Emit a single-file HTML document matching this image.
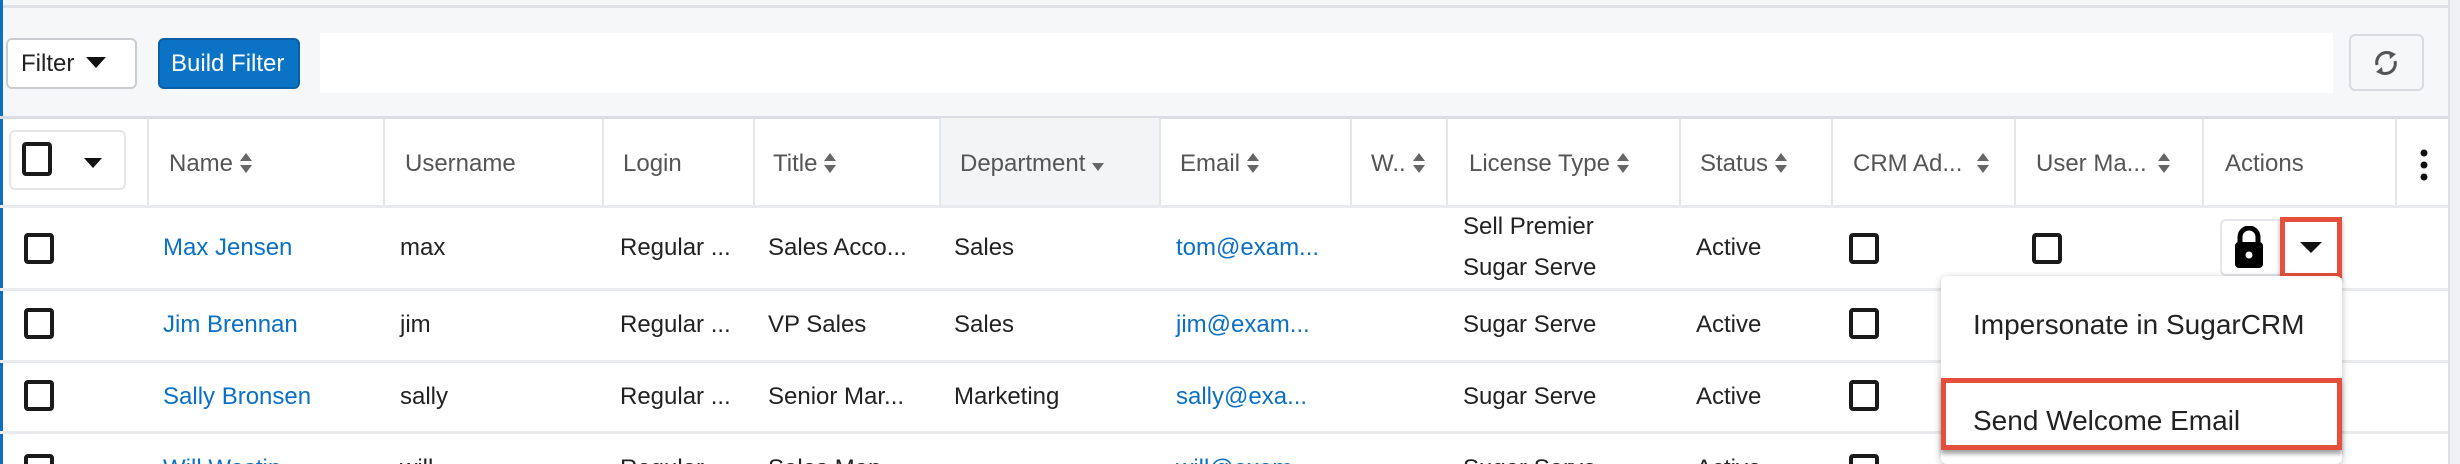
<!DOCTYPE html>
<html style="width:2460px;height:464px;overflow:hidden"><head><style>
*{margin:0;padding:0;box-sizing:border-box}
body{width:2460px;height:464px;overflow:hidden;background:#fff;font-family:"Liberation Sans",sans-serif;font-size:24px;color:#222;position:relative}
.a{position:absolute}
.t{position:absolute;white-space:nowrap;line-height:1}
.h{color:#555}
.l{color:#0b70c4}
.cb{position:absolute;width:30px;height:31px;border:4px solid #1a1a1a;border-radius:4px;background:#fff}
.vl{position:absolute;top:118px;height:89px;width:2px;background:#e3e6ea}
.hl{position:absolute;left:0;width:2448px;height:3px;background:#e8eaed}
.sort{display:inline-block;vertical-align:middle;margin-left:6px;width:14px;height:22px;position:relative;top:-2px}
</style></head><body>
<div class="a" style="left:0;top:0;width:2448px;height:118px;background:#f6f7f9"></div>
<div class="a" style="left:0;top:5px;width:2448px;height:3px;background:#dde1e6"></div>
<div class="a" style="left:0;top:0;width:3px;height:464px;background:#0b70c4"></div>
<div class="a" style="left:2448px;top:0;width:12px;height:464px;background:#eef0f2;border-left:2px solid #dcdfe3"></div>
<div class="a" style="left:6px;top:38px;width:131px;height:51px;background:#fff;border:2px solid #c9ccd0;border-radius:6px"></div>
<div class="t" style="left:21px;top:52px;color:#222">Filter</div>
<svg class="a" style="left:86px;top:57px" width="20" height="12"><path d="M0 0H20L10 11Z" fill="#111"/></svg>
<div class="a" style="left:158px;top:38px;width:142px;height:51px;background:#0b73c6;border:2px solid #0a5fa5;border-radius:6px"></div>
<div class="t" style="left:171px;top:52px;color:#fff">Build Filter</div>
<div class="a" style="left:320px;top:33px;width:2013px;height:60px;background:#fff"></div>
<div class="a" style="left:2349px;top:34px;width:75px;height:57px;background:#f6f7f9;border:2px solid #d8dbdf;border-radius:6px"></div>
<svg class="a" style="left:2370px;top:48px" width="32" height="30" viewBox="0 0 32 30"><path d="M7 17A10 10 0 0 1 22 6M25 13A10 10 0 0 1 10 24" fill="none" stroke="#555" stroke-width="3"/><path d="M19 3L26 6L20 11Z M13 27L6 24L12 19Z" fill="#555"/></svg>
<div class="a" style="left:0;top:116px;width:2448px;height:3px;background:#d9dee4"></div>
<div class="a" style="left:941px;top:118px;width:220px;height:89px;background:#f3f4f5"></div>
<div class="vl" style="left:147px"></div><div class="vl" style="left:383px"></div><div class="vl" style="left:602px"></div><div class="vl" style="left:753px"></div><div class="vl" style="left:939px"></div><div class="vl" style="left:1159px"></div><div class="vl" style="left:1350px"></div><div class="vl" style="left:1446px"></div><div class="vl" style="left:1679px"></div><div class="vl" style="left:1831px"></div><div class="vl" style="left:2014px"></div><div class="vl" style="left:2202px"></div><div class="vl" style="left:2395px"></div>
<div class="a" style="left:9px;top:130px;width:117px;height:60px;border:2px solid #e3e5e8;border-radius:6px;background:#fff"></div>
<div class="cb" style="left:22px;top:142px;height:34px"></div>
<svg class="a" style="left:84px;top:158px" width="18" height="11"><path d="M0 0H18L9 10Z" fill="#111"/></svg>
<div class="hl" style="top:205px"></div>
<svg width="0" height="0" style="position:absolute"><defs><g id="s"><path d="M1 9L7 1L13 9Z M1 13L7 21L13 13Z" fill="#666"/></g></defs></svg>
<div class="t h" style="left:169px;top:152px">Name<svg class="sort" viewBox="0 0 14 22"><use href="#s"/></svg></div>
<div class="t h" style="left:405px;top:152px">Username</div>
<div class="t h" style="left:623px;top:152px">Login</div>
<div class="t h" style="left:773px;top:152px">Title<svg class="sort" viewBox="0 0 14 22"><use href="#s"/></svg></div>
<div class="t h" style="left:960px;top:152px">Department<svg class="sort" viewBox="0 0 14 22"><path d="M1 11L13 11L7 19Z" fill="#666"/></svg></div>
<div class="t h" style="left:1180px;top:152px">Email<svg class="sort" viewBox="0 0 14 22"><use href="#s"/></svg></div>
<div class="t h" style="left:1371px;top:152px">W..<svg class="sort" viewBox="0 0 14 22"><use href="#s"/></svg></div>
<div class="t h" style="left:1469px;top:152px">License Type<svg class="sort" viewBox="0 0 14 22"><use href="#s"/></svg></div>
<div class="t h" style="left:1700px;top:152px">Status<svg class="sort" viewBox="0 0 14 22"><use href="#s"/></svg></div>
<div class="t h" style="left:1853px;top:152px">CRM Ad...<svg class="sort" viewBox="0 0 14 22" style="margin-left:14px"><use href="#s"/></svg></div>
<div class="t h" style="left:2036px;top:152px">User Ma...<svg class="sort" viewBox="0 0 14 22" style="margin-left:10px"><use href="#s"/></svg></div>
<div class="t h" style="left:2225px;top:152px">Actions</div>
<svg class="a" style="left:2419px;top:148px" width="10" height="34"><circle cx="5" cy="5" r="3.5" fill="#111"/><circle cx="5" cy="17" r="3.5" fill="#111"/><circle cx="5" cy="29" r="3.5" fill="#111"/></svg>
<div class="hl" style="top:288px"></div><div class="hl" style="top:360px"></div><div class="hl" style="top:431px"></div>
<div class="cb" style="left:24px;top:233px"></div><div class="cb" style="left:24px;top:308px"></div><div class="cb" style="left:24px;top:380px"></div><div class="cb" style="left:24px;top:454px"></div>
<div class="t l" style="left:163px;top:236px">Max Jensen</div>
<div class="t" style="left:400px;top:236px">max</div>
<div class="t" style="left:620px;top:236px">Regular ...</div>
<div class="t" style="left:768px;top:236px">Sales Acco...</div>
<div class="t" style="left:954px;top:236px">Sales</div>
<div class="t l" style="left:1176px;top:236px">tom@exam...</div>
<div class="t" style="left:1463px;top:215px">Sell Premier</div>
<div class="t" style="left:1463px;top:256px">Sugar Serve</div>
<div class="t" style="left:1696px;top:236px">Active</div>
<div class="cb" style="left:1849px;top:233px"></div><div class="cb" style="left:2032px;top:233px"></div>
<div class="t l" style="left:163px;top:313px">Jim Brennan</div>
<div class="t" style="left:400px;top:313px">jim</div>
<div class="t" style="left:620px;top:313px">Regular ...</div>
<div class="t" style="left:768px;top:313px">VP Sales</div>
<div class="t" style="left:954px;top:313px">Sales</div>
<div class="t l" style="left:1176px;top:313px">jim@exam...</div>
<div class="t" style="left:1463px;top:313px">Sugar Serve</div>
<div class="t" style="left:1696px;top:313px">Active</div>
<div class="cb" style="left:1849px;top:308px"></div>
<div class="t l" style="left:163px;top:385px">Sally Bronsen</div>
<div class="t" style="left:400px;top:385px">sally</div>
<div class="t" style="left:620px;top:385px">Regular ...</div>
<div class="t" style="left:768px;top:385px">Senior Mar...</div>
<div class="t" style="left:954px;top:385px">Marketing</div>
<div class="t l" style="left:1176px;top:385px">sally@exa...</div>
<div class="t" style="left:1463px;top:385px">Sugar Serve</div>
<div class="t" style="left:1696px;top:385px">Active</div>
<div class="cb" style="left:1849px;top:380px"></div><div class="cb" style="left:1849px;top:454px"></div>
<div class="t l" style="left:163px;top:457px">Will Westin</div>
<div class="t" style="left:400px;top:457px">will</div>
<div class="t" style="left:620px;top:457px">Regular ...</div>
<div class="t" style="left:768px;top:457px">Sales Man...</div>
<div class="t l" style="left:1176px;top:457px">will@exam...</div>
<div class="t" style="left:1463px;top:457px">Sugar Serve</div>
<div class="t" style="left:1696px;top:457px">Active</div>
<div class="a" style="left:2220px;top:219px;width:64px;height:57px;border:2px solid #e3e5e8;border-radius:6px 0 0 6px;background:#fff"></div>
<svg class="a" style="left:2233px;top:226px" width="32" height="42" viewBox="0 0 32 42"><path d="M7 17V11A9 9 0 0 1 25 11V17" fill="none" stroke="#000" stroke-width="5"/><rect x="2" y="16" width="28" height="26" rx="4" fill="#000"/><circle cx="16" cy="29" r="3.5" fill="#fff"/></svg>
<div class="a" style="left:2280px;top:217px;width:62px;height:61px;border:5px solid #e4503b;background:#fff;box-shadow:0 4px 4px rgba(0,0,0,.35)"></div>
<svg class="a" style="left:2300px;top:242px" width="22" height="12"><path d="M0 0H22L11 11Z" fill="#111"/></svg>
<div class="a" style="left:1941px;top:276px;width:401px;height:188px;background:#fff;border-radius:6px;box-shadow:0 2px 8px rgba(0,0,0,.25)"></div>
<div class="t" style="left:1973px;top:311px;font-size:28px">Impersonate in SugarCRM</div>
<div class="a" style="left:1941px;top:378px;width:401px;height:72px;border:5px solid #e4503b;background:#fff;box-shadow:0 4px 4px rgba(0,0,0,.35)"></div>
<div class="t" style="left:1973px;top:407px;font-size:28px">Send Welcome Email</div>
</body></html>
